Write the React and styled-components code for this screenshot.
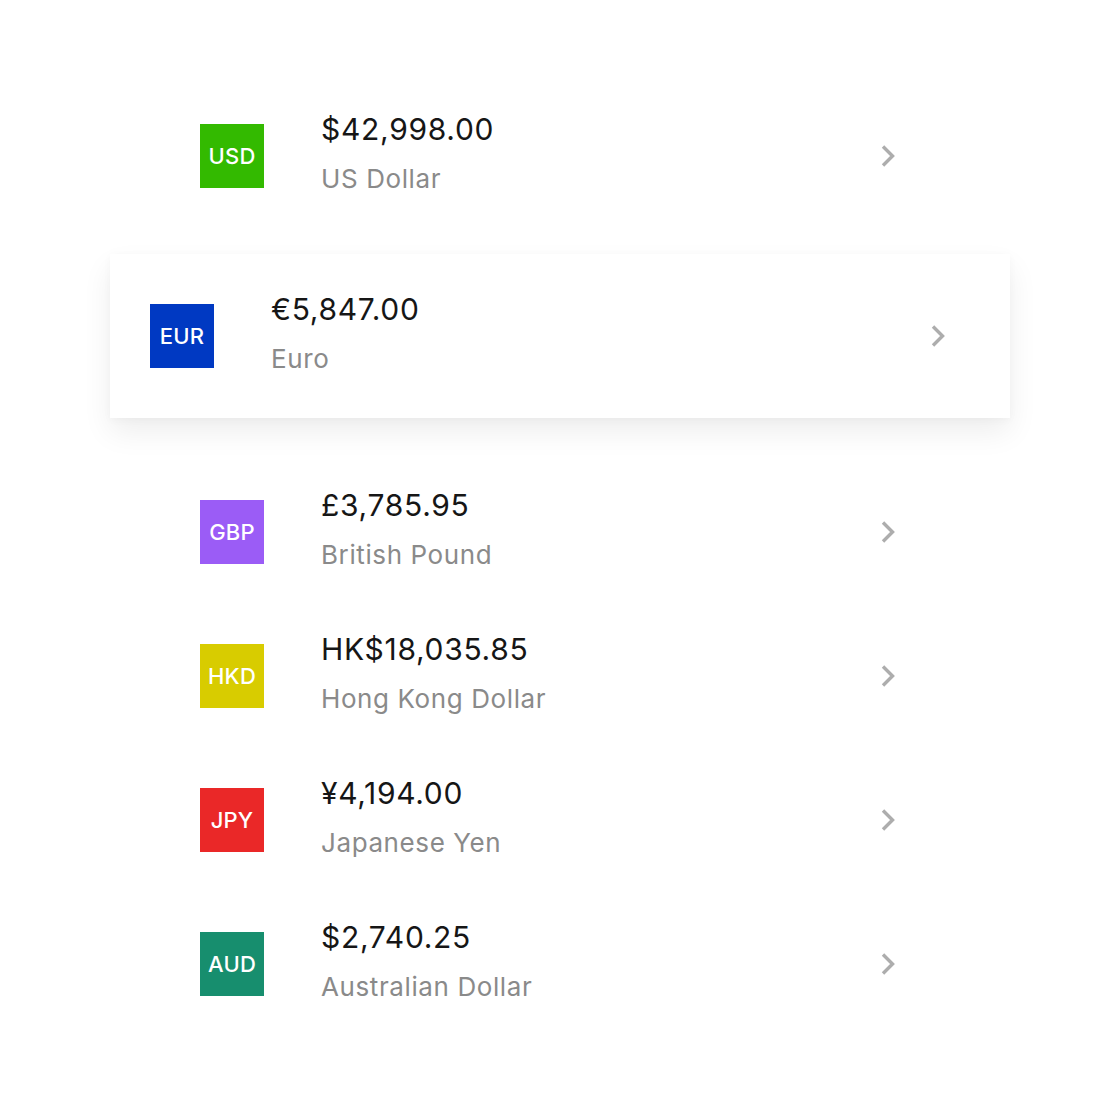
import React from "react";
import styled, { createGlobalStyle } from "styled-components";

const Global = createGlobalStyle`
  html, body { margin: 0; padding: 0; background: #ffffff; }
  body { font-family: Inter, "Noto Sans", sans-serif; -webkit-font-smoothing: antialiased; }
`;

const List = styled.div`
  width: 800px;
  margin: 0 auto;
  padding-top: 84px;
  display: flex;
  flex-direction: column;
`;

const Row = styled.div`
  display: flex;
  align-items: center;
  box-sizing: border-box;
  height: ${(p) => (p.$active ? "164px" : "144px")};
  padding: 0 64px 0 40px;
  background: #fff;
  ${(p) =>
    p.$active &&
    `
    margin: 26px -50px 42px;
    box-shadow: 0 14px 28px rgba(0,0,0,0.07), 0 2px 8px rgba(0,0,0,0.03);
  `}
`;

const Badge = styled.div`
  width: 64px;
  height: 64px;
  flex: none;
  background: ${(p) => p.$color};
  color: #fff;
  display: flex;
  align-items: center;
  justify-content: center;
  font-size: 22px;
  font-weight: 500;
  letter-spacing: 0.2px;
`;

const Info = styled.div`
  flex: 1;
  margin-left: 57px;
  padding-bottom: 4px;
  display: flex;
  flex-direction: column;
  gap: 10px;
`;

const Amount = styled.div`
  font-size: 30px;
  line-height: 40px;
  color: #161616;
  letter-spacing: 0.7px;
`;

const Label = styled.div`
  font-size: 26px;
  line-height: 40px;
  color: #8a8a8a;
  letter-spacing: 0.6px;
`;

const Chevron = () => (
  <svg width="16" height="24" viewBox="0 0 16 24" fill="none">
    <path d="M3 2.5 L12.5 12 L3 21.5" stroke="#adadad" strokeWidth="3.4" />
  </svg>
);

const data = [
  { code: "USD", color: "#33ba00", amount: "$42,998.00", name: "US Dollar" },
  { code: "EUR", color: "#0039c2", amount: "€5,847.00", name: "Euro", active: true },
  { code: "GBP", color: "#9b5cf6", amount: "£3,785.95", name: "British Pound" },
  { code: "HKD", color: "#d8cc00", amount: "HK$18,035.85", name: "Hong Kong Dollar" },
  { code: "JPY", color: "#ea2828", amount: "¥4,194.00", name: "Japanese Yen" },
  { code: "AUD", color: "#178e6e", amount: "$2,740.25", name: "Australian Dollar" },
];

export default function App() {
  return (
    <>
      <Global />
      <List>
        {data.map((d) => (
          <Row key={d.code} $active={d.active}>
            <Badge $color={d.color}>{d.code}</Badge>
            <Info>
              <Amount>{d.amount}</Amount>
              <Label>{d.name}</Label>
            </Info>
            <Chevron />
          </Row>
        ))}
      </List>
    </>
  );
}
